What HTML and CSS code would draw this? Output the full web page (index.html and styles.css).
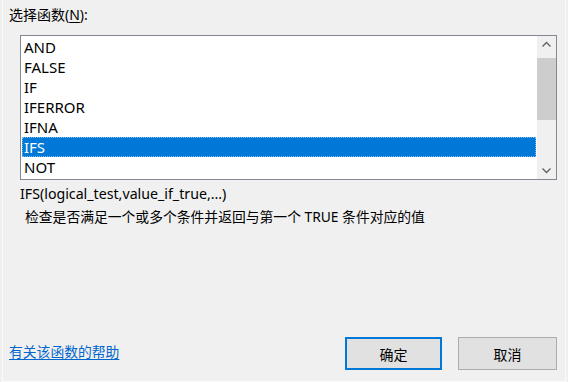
FILE: index.html
```html
<!DOCTYPE html>
<html lang="zh-CN">
<head>
  <meta charset="UTF-8" />
  <title>插入函数</title>
  <link rel="stylesheet" href="styles.css">
</head>
<body>
  <div class="dialog">
    <div class="label">选择函数(<u>N</u>):</div>

    <div class="listbox">
      <ul class="items">
        <li>AND</li>
        <li>FALSE</li>
        <li>IF</li>
        <li>IFERROR</li>
        <li>IFNA</li>
        <li class="selected">IFS</li>
        <li>NOT</li>
      </ul>
      <div class="scrollbar">
        <svg class="arrow" width="19" height="17" viewBox="0 0 19 17">
          <path d="M5.5 10.5 L9.5 6.5 L13.5 10.5" fill="none" stroke="#606060" stroke-width="1.3"/>
        </svg>
        <div class="track">
          <div class="thumb"></div>
        </div>
        <svg class="arrow" width="19" height="17" viewBox="0 0 19 17">
          <path d="M5.5 6.5 L9.5 10.5 L13.5 6.5" fill="none" stroke="#606060" stroke-width="1.3"/>
        </svg>
      </div>
    </div>

    <div class="syntax">IFS(logical_test,value_if_true,...)</div>
    <div class="desc">检查是否满足一个或多个条件并返回与第一个 TRUE 条件对应的值</div>

    <div class="footer">
      <a class="help" href="#">有关该函数的帮助</a>
      <div class="buttons">
        <button class="btn default">确定</button>
        <button class="btn">取消</button>
      </div>
    </div>
  </div>
</body>
</html>
```

FILE: styles.css
```css
:root {
  --bg: #f0f0f0;
  --border: #828790;
  --select: #0078d7;
  --link: #0066cc;
}

html, body {
  margin: 0;
  height: 100%;
}

body {
  background: var(--bg);
  color: #000;
  font-family: "Noto Sans", "Noto Sans CJK SC", sans-serif;
  font-size: 14px;
}

.dialog {
  box-sizing: border-box;
  height: 382px;
  margin: 0 2px;
  padding: 5px 8px 0 6px;
  border-left: 1px solid #fbfbfb;
  border-right: 1px solid #fbfbfb;
  border-bottom: 1px solid #fbfbfb;
  display: flex;
  flex-direction: column;
}

.label {
  line-height: 20px;
  font-size: 14px;
}

.label u {
  text-decoration-thickness: 1px;
  text-underline-offset: 2px;
}

.listbox {
  margin: 10px 0 0 11px;
  height: 145px;
  box-sizing: border-box;
  border: 1px solid var(--border);
  background: #fff;
  display: flex;
}

.items {
  list-style: none;
  margin: 0;
  padding: 1px 0 0 1px;
  flex: 1;
}

.items li {
  height: 20px;
  line-height: 21px;
  padding-left: 2px;
  font-size: 15px;
}

.items li.selected {
  background: var(--select);
  color: #fff;
  outline: 1px dotted #7fb8ea;
  outline-offset: -1px;
}

.scrollbar {
  width: 19px;
  background: var(--bg);
  display: flex;
  flex-direction: column;
  margin-left: 1px;
}

.arrow {
  display: block;
  flex: none;
}

.track {
  flex: 1;
  padding-top: 5px;
}

.thumb {
  height: 62px;
  background: #cdcdcd;
}

.syntax {
  margin: 4px 0 0 11px;
  line-height: 20px;
  font-size: 14.2px;
}

.desc {
  margin: 3px 0 0 16px;
  line-height: 20px;
  font-size: 13.8px;
}

.footer {
  margin-top: auto;
  display: flex;
  align-items: center;
  justify-content: space-between;
  padding-bottom: 11px;
}

.help {
  color: var(--link);
  text-decoration: underline;
  text-underline-offset: 2px;
  font-size: 13.8px;
  margin-top: -6px;
}

.buttons {
  display: flex;
  gap: 16px;
}

.btn {
  width: 99px;
  height: 33px;
  box-sizing: border-box;
  font-family: inherit;
  font-size: 14px;
  background: #e1e1e1;
  border: 1px solid #adadad;
  color: #000;
  padding: 0;
}

.btn.default {
  border: 2px solid var(--select);
  width: 97px;
}
```
